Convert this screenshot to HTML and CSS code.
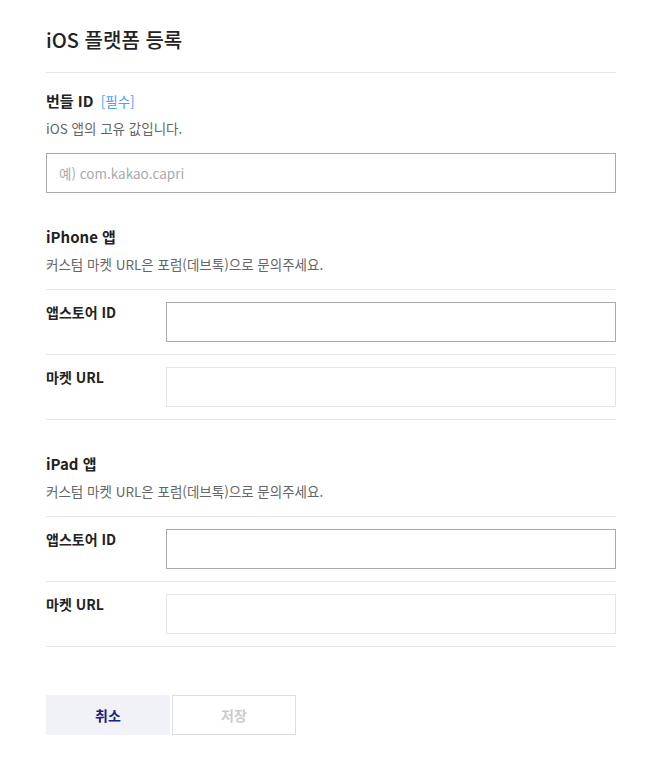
FILE: index.html
```html
<!DOCTYPE html>
<html lang="ko">
<head>
<meta charset="utf-8">
<title>iOS 플랫폼 등록</title>
<link rel="stylesheet" href="styles.css">
</head>
<body>
<div class="page">
  <h1 class="title">iOS 플랫폼 등록</h1>

  <section class="block">
    <h2 class="heading">번들 ID <span class="req">[필수]</span></h2>
    <p class="desc">iOS 앱의 고유 값입니다.</p>
    <input class="field full" type="text" placeholder="예) com.kakao.capri">
  </section>

  <section class="block">
    <h2 class="heading">iPhone 앱</h2>
    <p class="desc">커스텀 마켓 URL은 포럼(데브톡)으로 문의주세요.</p>
    <div class="rows">
      <div class="row">
        <div class="label">앱스토어 ID</div>
        <input class="field" type="text">
      </div>
      <div class="row">
        <div class="label">마켓 URL</div>
        <input class="field light" type="text" disabled>
      </div>
    </div>
  </section>

  <section class="block">
    <h2 class="heading">iPad 앱</h2>
    <p class="desc">커스텀 마켓 URL은 포럼(데브톡)으로 문의주세요.</p>
    <div class="rows">
      <div class="row">
        <div class="label">앱스토어 ID</div>
        <input class="field" type="text">
      </div>
      <div class="row">
        <div class="label">마켓 URL</div>
        <input class="field light" type="text" disabled>
      </div>
    </div>
  </section>

  <div class="actions">
    <button class="btn cancel" type="button">취소</button>
    <button class="btn save" type="button" disabled>저장</button>
  </div>
</div>
</body>
</html>
```

FILE: styles.css
```css
* { box-sizing: border-box; }
html, body { margin: 0; padding: 0; background: #fff; }
body {
  font-family: "Noto Sans CJK KR", "Noto Sans", sans-serif;
  color: #222;
}
.page {
  padding: 25px 46px 0 46px;
  width: 662px;
}
.title {
  margin: 0;
  font-size: 20px;
  line-height: 30px;
  font-weight: 500;
  padding-bottom: 17px;
  border-bottom: 1px solid #e5e5e5;
}
.block { margin-top: 17px; }
.block + .block { margin-top: 33px; }
.heading {
  margin: 0;
  font-size: 15px;
  line-height: 22px;
  font-weight: 700;
  color: #222;
}
.req {
  color: #4a9ff5;
  font-weight: 400;
  font-size: 13.5px;
  margin-left: 3px;
}
.desc {
  margin: 6px 0 0;
  font-size: 13.5px;
  line-height: 20px;
  color: #666;
}
.field {
  display: block;
  height: 40px;
  border: 1px solid #aaa;
  border-radius: 0;
  padding: 0 12px;
  font-family: inherit;
  font-size: 13.5px;
  color: #222;
  background: #fff;
  outline: none;
  flex: 1;
  min-width: 0;
}
.field::placeholder { color: #aaa; }
.field.full { width: 100%; margin-top: 15px; }
.field.light { border-color: #e5e5e5; }
.rows {
  margin-top: 15px;
  border-bottom: 1px solid #e5e5e5;
}
.row {
  display: flex;
  border-top: 1px solid #e5e5e5;
  padding: 12px 0;
}
.label {
  width: 120px;
  flex: none;
  font-size: 14px;
  font-weight: 700;
  line-height: 20px;
  color: #222;
}
.actions {
  display: flex;
  gap: 2px;
  margin-top: 48px;
}
.btn {
  width: 124px;
  height: 40px;
  font-family: inherit;
  font-size: 14px;
  font-weight: 700;
  border: 1px solid transparent;
  border-radius: 0;
  padding: 0;
}
.cancel {
  background: #f0f2f8;
  border-color: #f0f2f8;
  color: #1a237e;
}
.save {
  background: #fff;
  border-color: #ddd;
  color: #ccc;
}
```
